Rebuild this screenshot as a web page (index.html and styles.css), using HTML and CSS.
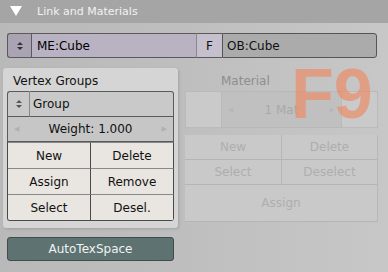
FILE: index.html
```html
<!DOCTYPE html>
<html lang="en">
<head>
    <meta charset="UTF-8">
    <title>Link and Materials</title>
    <link rel="stylesheet" href="styles.css">
</head>
<body>
    <div class="panel">
        <div class="panel-header">
            <svg class="collapse" width="12" height="10" viewBox="0 0 12 10"><path d="M0 0 L12 0 L6 10 Z" fill="#fff"/></svg>
            <span>Link and Materials</span>
        </div>

        <div class="link-row">
            <div class="btn arrows mesh-arrows">
                <svg width="8" height="10" viewBox="0 0 8 10"><path d="M1 4 L4 1 L7 4 Z M1 6 L4 9 L7 6 Z" fill="#333"/></svg>
            </div>
            <div class="field mesh-field">ME:Cube</div>
            <div class="btn fake-btn">F</div>
            <div class="field ob-field">OB:Cube</div>
        </div>

        <div class="columns">
            <div class="vgroups">
                <div class="box-title">Vertex Groups</div>
                <div class="group-row">
                    <div class="btn arrows">
                        <svg width="8" height="10" viewBox="0 0 8 10"><path d="M1 4 L4 1 L7 4 Z M1 6 L4 9 L7 6 Z" fill="#555"/></svg>
                    </div>
                    <div class="field group-field">Group</div>
                </div>
                <div class="num-field">
                    <span class="nudge">&#9664;</span>
                    <span>Weight: 1.000</span>
                    <span class="nudge">&#9654;</span>
                </div>
                <div class="btn-grid">
                    <div class="btn cream">New</div>
                    <div class="btn cream">Delete</div>
                    <div class="btn cream">Assign</div>
                    <div class="btn cream">Remove</div>
                    <div class="btn cream">Select</div>
                    <div class="btn cream">Desel.</div>
                </div>
            </div>

            <div class="material">
                <div class="mat-title">Material</div>
                <div class="mat-row">
                    <div class="mat-swatch"></div>
                    <div class="mat-field">
                        <span class="nudge">&#9664;</span>
                        <span>1 Mat</span>
                        <span class="nudge">&#9654;</span>
                    </div>
                    <div class="mat-swatch"></div>
                </div>
                <div class="mat-grid">
                    <div class="mat-btn">New</div>
                    <div class="mat-btn">Delete</div>
                    <div class="mat-btn">Select</div>
                    <div class="mat-btn">Deselect</div>
                    <div class="mat-btn wide">Assign</div>
                </div>
                <div class="hotkey">F9</div>
            </div>
        </div>

        <div class="btn autotex">AutoTexSpace</div>
    </div>
</body>
</html>
```

FILE: styles.css
```css
* {
    margin: 0;
    padding: 0;
    box-sizing: border-box;
}
body {
    width: 388px;
    height: 272px;
    overflow: hidden;
    background-color: #bdbdbd;
    font-family: "DejaVu Sans", sans-serif;
    font-size: 12px;
    color: #111;
}
.panel {
    height: 272px;
    background: linear-gradient(90deg, #b9b9b9 0%, #bebebe 45%, #c7c7c7 100%);
}
.panel-header {
    height: 23px;
    background-color: #a5a5a5;
    display: flex;
    align-items: center;
    color: #f2f2f2;
    font-size: 11px;
}
.collapse {
    margin-left: 10px;
    margin-right: 15px;
    margin-top: -2px;
}

.btn {
    display: flex;
    align-items: center;
    justify-content: center;
}

/* link row */
.link-row {
    display: flex;
    height: 25px;
    margin: 10px 11px 0 7px;
}
.field {
    display: flex;
    align-items: center;
    padding-left: 5px;
    font-size: 12px;
}
.arrows {
    width: 24px;
    border: 1px solid #5a5a5a;
    border-right: 0;
}
.mesh-arrows {
    background-color: #aaa3b3;
    border-radius: 3px 0 0 3px;
}
.mesh-field {
    width: 166px;
    background-color: #b9b2c3;
    border: 1px solid #5a5a5a;
    border-right: 1px solid #8a8a8a;
    color: #000;
}
.fake-btn {
    width: 25px;
    background-color: #c6bfcd;
    border: 1px solid #5a5a5a;
    border-left: 0;
    border-right: 0;
}
.ob-field {
    flex: 1;
    background-color: #ababab;
    border: 1px solid #555;
    border-radius: 0 3px 3px 0;
    padding-left: 4px;
}

/* columns */
.columns {
    display: flex;
    margin-top: 10px;
}
.vgroups {
    width: 175px;
    height: 160px;
    margin-left: 3px;
    padding: 0 4px;
    background-color: #d5d5d5;
    border-radius: 3px;
    box-shadow: 1px 1px 3px rgba(0, 0, 0, 0.15);
}
.box-title {
    height: 23px;
    padding: 6px 0 0 6px;
    color: #111;
}
.group-row {
    display: flex;
    height: 26px;
}
.group-row .arrows {
    width: 22px;
    background-color: #c9c9c9;
    border-radius: 3px 0 0 0;
}
.group-field {
    flex: 1;
    background-color: #c9c9c9;
    border: 1px solid #5a5a5a;
    border-left: 1px solid #888;
    padding-left: 3px;
    border-radius: 0 3px 0 0;
}
.num-field {
    height: 25px;
    display: flex;
    align-items: center;
    justify-content: space-between;
    padding: 0 6px;
    background-color: #c6c6c6;
    border: 1px solid #5a5a5a;
    border-top: 0;
}
.nudge {
    font-size: 7px;
    color: #b0b0b0;
}
.btn-grid {
    display: grid;
    grid-template-columns: 83px 1fr;
    grid-auto-rows: 26px;
    border-left: 1px solid #4a4a4a;
    border-bottom: 1px solid #4a4a4a;
    border-radius: 0 0 3px 3px;
    overflow: hidden;
}
.cream {
    background-color: #e9e5e0;
    border-right: 1px solid #4a4a4a;
    border-top: 1px solid #888;
}

/* material (disabled) */
.material {
    position: relative;
    width: 193px;
    margin-left: 7px;
    color: #a9a9a9;
}
.mat-title {
    height: 23px;
    padding: 6px 0 0 36px;
    color: #8e8e8e;
}
.mat-row {
    display: flex;
    height: 37px;
}
.mat-swatch {
    width: 37px;
    background-color: #cacaca;
    border: 1px solid #bababa;
}
.mat-field {
    flex: 1;
    display: flex;
    align-items: center;
    justify-content: space-between;
    padding: 0 6px;
    background-color: #c0c0c0;
    border-top: 1px solid #b8b8b8;
    border-bottom: 1px solid #b8b8b8;
}
.mat-field .nudge {
    color: #b7b7b7;
}
.mat-grid {
    margin-top: 7px;
    display: grid;
    grid-template-columns: 97px 1fr;
    grid-auto-rows: 25px;
}
.mat-btn {
    display: flex;
    align-items: center;
    justify-content: center;
    background-color: #c9c9c9;
    border-right: 1px solid #b7b7b7;
    border-bottom: 1px solid #b5b5b5;
    color: #aeaeae;
}
.mat-btn.wide {
    grid-column: 1 / 3;
    height: 37px;
}
.hotkey {
    position: absolute;
    top: -9px;
    left: 106px;
    font-family: "Liberation Sans", sans-serif;
    font-weight: bold;
    font-size: 70px;
    line-height: 1;
    color: rgba(236, 138, 100, 0.68);
}

.autotex {
    width: 167px;
    height: 24px;
    margin: 9px 0 0 7px;
    background-color: #5d7271;
    border: 1px solid #3f4d4c;
    border-radius: 3px;
    color: #eef2f2;
}
```
